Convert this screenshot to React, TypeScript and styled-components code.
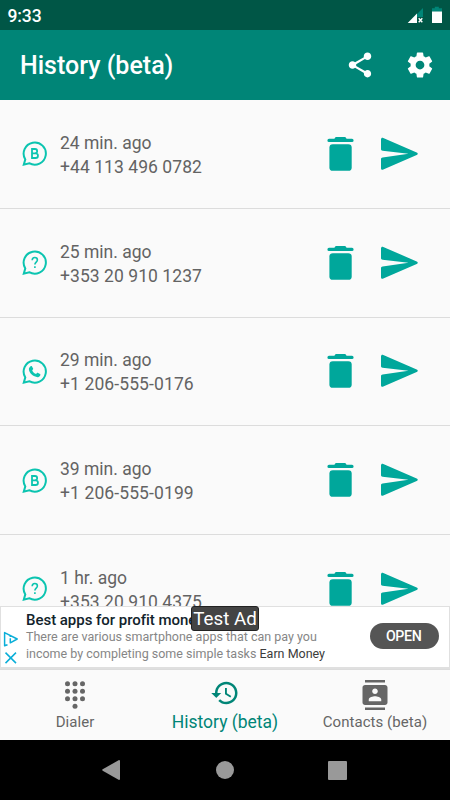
import React from "react";
import styled, { createGlobalStyle } from "styled-components";

const GlobalStyle = createGlobalStyle`
  * { box-sizing: border-box; }
  body { margin: 0; background: #000; font-family: Roboto, "Liberation Sans", sans-serif; }
`;

const Screen = styled.div`
  width: 450px;
  height: 800px;
  display: flex;
  flex-direction: column;
  overflow: hidden;
  background: #fafafa;
`;

const StatusBar = styled.header`
  height: 30px;
  flex: none;
  display: flex;
  align-items: center;
  justify-content: space-between;
  padding: 2px 0 0 7.5px;
  background: #005646;
  color: #fff;
`;

const Clock = styled.span`
  font-size: 17.5px;
  font-weight: 500;
  line-height: 28px;
  letter-spacing: -0.1px;
`;

const StatusIcons = styled.svg`
  display: block;
  margin-top: -2px;
`;

const AppBar = styled.div`
  height: 70px;
  flex: none;
  display: flex;
  align-items: center;
  gap: 30px;
  padding: 0 15px 0 20px;
  background: #008577;
  color: #fff;
`;

const Title = styled.h1`
  flex: 1;
  margin: 2px 0 0;
  font-size: 25px;
  font-weight: 500;
  line-height: 30px;
`;

const Icon = styled.svg`
  display: block;
  flex: none;
  fill: currentColor;
`;

const List = styled.main`
  height: 506px;
  flex: none;
  overflow: hidden;
`;

const Row = styled.div`
  height: 108.75px;
  display: flex;
  align-items: center;
  padding-left: 21px;
  border-bottom: 1.25px solid #dcdcdc;
`;

const Lines = styled.div`
  width: 276px;
  padding-left: 12px;
  color: #636363;
  font-size: 17.5px;
  line-height: 24px;
  margin-top: 2.1px;
  white-space: nowrap;
`;

const Line = styled.div<{ $spacing?: number }>`
  letter-spacing: ${(p) => p.$spacing ?? 0}px;
`;

const Actions = styled.div`
  display: flex;
  gap: 26px;
  padding-left: 3px;
  color: #00a79b;
`;

const Ad = styled.aside`
  height: 63px;
  flex: none;
  position: relative;
  display: flex;
  background: #fff;
  border: 1px solid #e0e0e0;
  border-width: 1px 1px 2px;
`;

const AdMarks = styled.div`
  width: 25px;
  padding: 24px 0 0 2px;
`;

const AdCopy = styled.div`
  width: 344px;
  white-space: nowrap;
`;

const AdHeadline = styled.div`
  font-size: 15px;
  font-weight: 500;
  line-height: 18px;
  letter-spacing: -0.03px;
  margin-top: 4px;
  color: #12232b;
`;

const AdText = styled.div`
  font-size: 12.5px;
  line-height: 16.5px;
  color: #868686;
`;

const Advertiser = styled.span`
  color: #3c3c3c;
`;

const OpenButton = styled.button`
  width: 69px;
  height: 26px;
  margin-top: 16px;
  padding: 1px 1.5px 0 0;
  border: 0;
  border-radius: 13px;
  background: #555;
  color: #fff;
  font: 500 14.2px/25px Roboto, sans-serif;
  letter-spacing: -0.3px;
`;

const TestLabel = styled.div`
  position: absolute;
  left: 190px;
  top: -1px;
  width: 68px;
  height: 25px;
  border: 1px solid #222;
  border-radius: 3px;
  background: #444;
  color: #fff;
  font-size: 18.75px;
  line-height: 25px;
  text-align: center;
  white-space: nowrap;
`;

const Tabs = styled.nav`
  height: 71px;
  flex: none;
  display: grid;
  grid-template-columns: repeat(3, 150px);
  border-top: 1px solid #dcdcdc;
`;

const Tab = styled.div<{ $active?: boolean }>`
  display: flex;
  flex-direction: column;
  align-items: center;
  padding-top: ${(p) => (p.$active ? 7.5 : 10)}px;
  color: ${(p) => (p.$active ? "#008577" : "#666")};
  font-size: ${(p) => (p.$active ? 17.5 : 15)}px;
  line-height: ${(p) => (p.$active ? 28 : 25)}px;
  letter-spacing: ${(p) => (p.$active ? 0 : 0.05)}px;
  white-space: nowrap;
`;

const SystemBar = styled.footer`
  height: 60px;
  flex: none;
  display: grid;
  grid-template-columns: repeat(3, 112.5px);
  justify-content: center;
  align-items: center;
  justify-items: center;
  background: #000;
  color: #999;
`;

type Kind = "business" | "unknown" | "whatsapp";

const ChatIcon = ({ kind }: { kind: Kind }) => (
  <Icon width="27" height="27" viewBox="0 0 27 27">
    <g fill="none" stroke="#0bc4b0" strokeWidth="2">
      <path d="M4.3 19.4A11.1 11.1 0 1 1 8.2 23.2L2.8 24.6Z" strokeLinejoin="miter" />
      {kind === "business" && (
        <path d="M11 9v9h3.6a2.35 2.35 0 0 0 0-4.7H11h3a2.15 2.15 0 0 0 0-4.3Z" strokeWidth="1.8" />
      )}
      {kind === "unknown" && (
        <path d="M11.2 11.2c0-1.7 1.1-2.7 2.6-2.7s2.6 1 2.6 2.5c0 2.1-2.5 2.2-2.5 4.5M13.9 17.2v1.8" strokeWidth="1.6" />
      )}
    </g>
    {kind === "whatsapp" && (
      <path
        fill="#0bc4b0"
        d="M9.6 8.3c.4-.4 1.1-.4 1.4.1l1.1 2.2c.2.5-.1 1-.9 1.8.9 1.8 2.1 2.9 3.9 3.6.8-1 1.1-1.4 1.6-1.2l2.3 1.1c.5.3.5.8.2 1.5-.6 1.3-2 1.9-3.4 1.7-4.1-.7-7.5-4-7.9-7.5-.1-1.4.6-2.5 1.7-3.3Z"
      />
    )}
  </Icon>
);

const TrashIcon = () => (
  <Icon width="27" height="36" viewBox="0 0 27 36">
    <path d="M2 2.8h5.2c.8 0 .7-1.7 2-1.7h8.6c1.3 0 1.2 1.7 2 1.7H25a1.5 1.5 0 0 1 0 3.2H2a1.5 1.5 0 0 1 0-3.2Z" />
    <rect x="2.4" y="8.2" width="22.3" height="26.6" rx="3.4" />
  </Icon>
);

const SendIcon = () => (
  <Icon width="38" height="36" viewBox="0 0 38 36">
    <path d="M1 3.4C1 2.1 2.1 1.5 3.3 2L36.7 16.4c1.4.7 1.4 1.9 0 2.5L3.3 33.6C2.1 34.1 1 33.5 1 32.2V23.3c0-1 .6-1.6 1.6-1.8L28.5 17.7 2.6 14.8c-1-.2-1.6-.8-1.6-1.8Z" />
  </Icon>
);

const entries: { kind: Kind; when: string; phone: string; spacing: number }[] = [
  { kind: "business", when: "24 min. ago", phone: "+44 113 496 0782", spacing: 0.06 },
  { kind: "unknown", when: "25 min. ago", phone: "+353 20 910 1237", spacing: 0.06 },
  { kind: "whatsapp", when: "29 min. ago", phone: "+1 206-555-0176", spacing: 0.11 },
  { kind: "business", when: "39 min. ago", phone: "+1 206-555-0199", spacing: 0.11 },
  { kind: "unknown", when: "1 hr. ago", phone: "+353 20 910 4375", spacing: 0.06 },
];

export default function App() {
  return (
    <Screen>
      <GlobalStyle />
      <StatusBar>
        <Clock>9:33</Clock>
        <StatusIcons width="45" height="30" viewBox="0 0 45 30">
          <path d="M18 8v9h-6v-3Z" fill="#008577" />
          <path d="M12 13.5V23H2.7Z" fill="#fff" />
          <path d="m13.7 18.3 3.6 4M17.3 18.3l-3.6 4" stroke="#fff" strokeWidth="1.4" />
          <path d="M29.8 6.7h4v1.5H37v3.5H27V8.2h2.8Z" fill="#008577" />
          <path d="M27 11.5h10V23H27Z" fill="#fff" />
        </StatusIcons>
      </StatusBar>
      <AppBar>
        <Title>History (beta)</Title>
        <Icon width="30" height="30" viewBox="0 0 24 24">
          <path d="M18 16.08c-.76 0-1.44.3-1.96.77L8.91 12.7c.05-.23.09-.46.09-.7s-.04-.47-.09-.7l7.05-4.11c.54.5 1.25.81 2.04.81 1.66 0 3-1.34 3-3s-1.34-3-3-3-3 1.34-3 3c0 .24.04.47.09.7L8.04 9.81C7.5 9.31 6.79 9 6 9c-1.66 0-3 1.34-3 3s1.34 3 3 3c.79 0 1.5-.31 2.04-.81l7.12 4.16c-.05.21-.08.43-.08.65 0 1.61 1.31 2.92 2.92 2.92s2.92-1.31 2.92-2.92-1.31-2.92-2.92-2.92z" />
        </Icon>
        <Icon width="30" height="30" viewBox="0 0 24 24">
          <path d="M19.43 12.98c.04-.32.07-.64.07-.98s-.03-.66-.07-.98l2.11-1.65c.19-.15.24-.42.12-.64l-2-3.46c-.12-.22-.39-.3-.61-.22l-2.49 1c-.52-.4-1.08-.73-1.69-.98l-.38-2.65C14.46 2.18 14.25 2 14 2h-4c-.25 0-.46.18-.49.42l-.38 2.65c-.61.25-1.17.59-1.69.98l-2.49-1c-.23-.09-.49 0-.61.22l-2 3.46c-.13.22-.07.49.12.64l2.11 1.65c-.04.32-.07.65-.07.98s.03.66.07.98l-2.11 1.65c-.19.15-.24.42-.12.64l2 3.46c.12.22.39.3.61.22l2.49-1c.52.4 1.08.73 1.69.98l.38 2.65c.03.24.24.42.49.42h4c.25 0 .46-.18.49-.42l.38-2.65c.61-.25 1.17-.59 1.69-.98l2.49 1c.23.09.49 0 .61-.22l2-3.46c.12-.22.07-.49-.12-.64l-2.11-1.65zM12 15.5c-1.93 0-3.5-1.57-3.5-3.5s1.57-3.5 3.5-3.5 3.5 1.57 3.5 3.5-1.57 3.5-3.5 3.5z" />
        </Icon>
      </AppBar>
      <List>
        {entries.map((e) => (
          <Row key={e.when}>
            <ChatIcon kind={e.kind} />
            <Lines>
              <Line>{e.when}</Line>
              <Line $spacing={e.spacing}>{e.phone}</Line>
            </Lines>
            <Actions>
              <TrashIcon />
              <SendIcon />
            </Actions>
          </Row>
        ))}
      </List>
      <Ad>
        <AdMarks>
          <Icon width="17" height="34" viewBox="0 0 17 34">
            <g fill="none" stroke="#0aaed8" strokeWidth="1.5">
              <path d="M4.5 13.8 1.6 14.8V1.6L14.2 8 7.3 11.8V7.2M7.3 4.4v1.5" strokeLinejoin="round" />
              <path d="m2.5 21.6 10.5 10.5M13 21.6 2.5 32.1" />
            </g>
          </Icon>
        </AdMarks>
        <AdCopy>
          <AdHeadline>Best apps for profit money</AdHeadline>
          <AdText>There are various smartphone apps that can pay you</AdText>
          <AdText>
            income by completing some simple tasks <Advertiser>Earn Money</Advertiser>
          </AdText>
        </AdCopy>
        <OpenButton>OPEN</OpenButton>
        <TestLabel>Test Ad</TestLabel>
      </Ad>
      <Tabs>
        <Tab>
          <Icon width="30" height="30" viewBox="0 0 24 24">
            {[3, 9, 15].flatMap((y) => [6, 12, 18].map((x) => <circle key={`${x}-${y}`} cx={x} cy={y} r="2" />))}
            <circle cx="12" cy="21" r="2" />
          </Icon>
          Dialer
        </Tab>
        <Tab $active>
          <Icon width="30" height="30" viewBox="0 0 24 24">
            <path d="M13 3c-4.97 0-9 4.03-9 9H1l3.89 3.89.07.14L9 12H6c0-3.87 3.13-7 7-7s7 3.13 7 7-3.13 7-7 7c-1.93 0-3.68-.79-4.94-2.06l-1.42 1.42C8.27 19.99 10.51 21 13 21c4.97 0 9-4.03 9-9s-4.03-9-9-9zm-1 5v5l4.28 2.54.72-1.21-3.5-2.08V8H12z" />
          </Icon>
          History (beta)
        </Tab>
        <Tab>
          <Icon width="30" height="30" viewBox="0 0 24 24">
            <path d="M20 0H4v2h16V0zM4 24h16v-2H4v2zM20 4H4c-1.1 0-2 .9-2 2v12c0 1.1.9 2 2 2h16c1.1 0 2-.9 2-2V6c0-1.1-.9-2-2-2zm-8 2.75c1.24 0 2.25 1.01 2.25 2.25s-1.01 2.25-2.25 2.25S9.75 10.24 9.75 9 10.76 6.75 12 6.75zM17 17H7v-1.5c0-1.67 3.33-2.5 5-2.5s5 .83 5 2.5V17z" />
          </Icon>
          Contacts (beta)
        </Tab>
      </Tabs>
      <SystemBar>
        <Icon width="21" height="20" viewBox="0 0 21 20">
          <path d="M17 0q1 0 1 1v18q0 1-1 1L.7 10.7Q-.3 10 .7 9.3Z" />
        </Icon>
        <Icon width="18" height="18" viewBox="0 0 18 18">
          <circle cx="9" cy="9" r="9" />
        </Icon>
        <Icon width="19" height="19" viewBox="0 0 19 19">
          <rect width="19" height="19" rx="1" />
        </Icon>
      </SystemBar>
    </Screen>
  );
}
